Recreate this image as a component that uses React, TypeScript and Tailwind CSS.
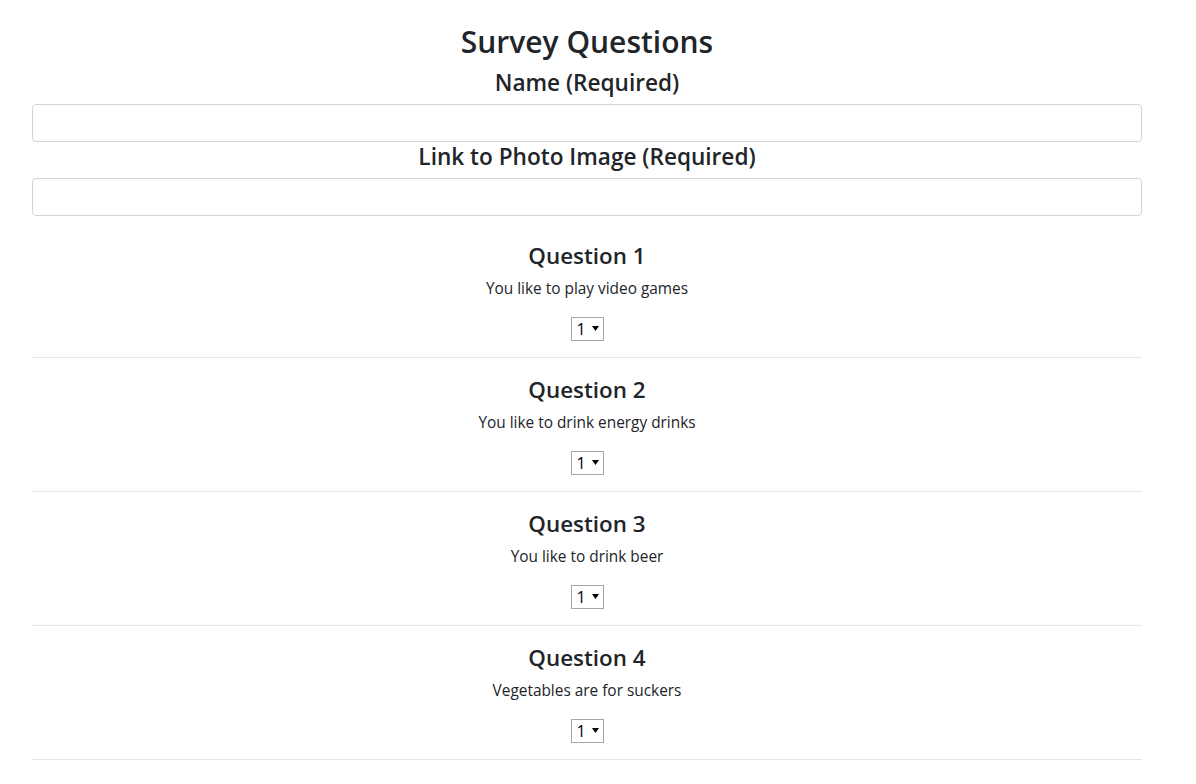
import React from "react";

const questions = [
  "You like to play video games",
  "You like to drink energy drinks",
  "You like to drink beer",
  "Vegetables are for suckers",
  "You enjoy long walks on the beach",
];

function FakeSelect() {
  return (
    <div className="relative mx-auto flex h-[24px] w-[33px] items-center border border-[#a6a6a6] bg-white">
      <span className="ml-[5px] text-[16px] leading-none text-black">1</span>
      <svg className="absolute left-[20px] top-[8px]" width="7" height="5" viewBox="0 0 7 5">
        <polygon points="0,0 7,0 3.5,5" fill="#000" />
      </svg>
    </div>
  );
}

export default function App() {
  return (
    <div
      className="min-h-screen bg-white text-[#212529]"
      style={{ fontFamily: '"Open Sans", "Noto Sans", sans-serif' }}
    >
      <div className="ml-[32px] w-[1110px] pt-[24px] text-center">
        <h2 className="mb-[8px] h-[36px] text-[30px] font-semibold leading-[36px]">Survey Questions</h2>
        <label className="mb-[8px] block h-[28px] pt-[1px] text-[22.6px] font-semibold leading-[28px]">Name (Required)</label>
        <input className="block h-[38px] w-full rounded-[4px] border border-[#ced4da] bg-white px-3" />
        <label className="mb-[8px] block h-[28px] pt-[1px] text-[22.6px] font-semibold leading-[28px]">Link to Photo Image (Required)</label>
        <input className="block h-[38px] w-full rounded-[4px] border border-[#ced4da] bg-white px-3" />
        {questions.map((q, i) => (
          <div key={i}>
            {i > 0 && <div className="h-px bg-[#e5e5e5]" />}
            <div className={i === 0 ? "pb-[16px] pt-[25px]" : "pb-[16px] pt-[17px]"}>
              <h4 className="mb-[7px] h-[29px] text-[22.4px] font-semibold leading-[29px]">Question {i + 1}</h4>
              <p className="mb-[16px] h-[24px] text-[15.4px] leading-[24px]">{q}</p>
              <FakeSelect />
            </div>
          </div>
        ))}
        <div className="h-px bg-[#e5e5e5]" />
      </div>
    </div>
  );
}
